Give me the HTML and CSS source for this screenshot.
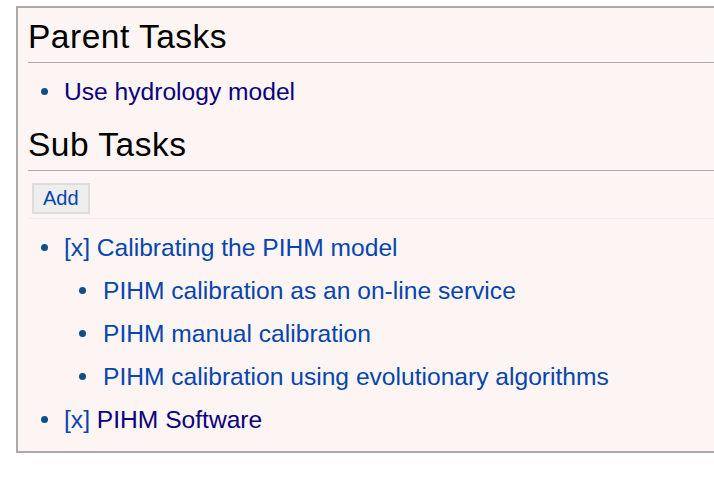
FILE: index.html
```html
<!DOCTYPE html>
<html lang="en">
<head>
    <meta charset="UTF-8">
    <meta name="viewport" content="width=device-width, initial-scale=1.0">
    <link rel="stylesheet" href="styles.css">
    <title> Tasks </title>
</head>
<body>
    <div class="task-box">
        <h2 class="section-head">Parent Tasks</h2>
        <ul class="task-list">
            <li><a href="#" class="visited">Use hydrology model</a></li>
        </ul>

        <h2 class="section-head">Sub Tasks</h2>
        <div class="toolbar">
            <button class="add-button">Add</button>
        </div>
        <ul class="task-list">
            <li><a href="#">[x]</a> <a href="#">Calibrating the PIHM model</a>
                <ul class="sub-list">
                    <li><a href="#">PIHM calibration as an on-line service</a></li>
                    <li><a href="#">PIHM manual calibration</a></li>
                    <li><a href="#">PIHM calibration using evolutionary algorithms</a></li>
                </ul>
            </li>
            <li><a href="#">[x]</a> <a href="#" class="visited">PIHM Software</a></li>
        </ul>
    </div>
</body>
</html>
```

FILE: styles.css
```css
body {
    margin: 0;
    padding: 0;
    font-family: 'Liberation Sans', Arial, sans-serif;
    background: #ffffff;
}

.task-box {
    margin: 6px 0 0 16px;
    padding: 0 0 10px 10px;
    border: 2px solid #aaaaaa;
    border-right: none;
    background: #fdf5f3;
}

.section-head {
    margin: 13px 0 0;
    padding-bottom: 6px;
    font-size: 33.5px;
    letter-spacing: 0.5px;
    font-weight: normal;
    line-height: 38px;
    color: #000;
    border-bottom: 1px solid #aaaaaa;
}

.section-head:first-child {
    margin-top: 10px;
}

.task-list {
    list-style: none;
    margin: 7px 0 0;
    padding-left: 36px;
    font-size: 24.6px;
    line-height: 43px;
}

.sub-list {
    list-style: none;
    margin: 0;
    padding-left: 39px;
}

.task-list li::before {
    content: "";
    display: inline-block;
    width: 7px;
    height: 7px;
    border-radius: 50%;
    background: #0d4f86;
    margin-left: -23px;
    margin-right: 16px;
    vertical-align: 5px;
}

.sub-list li::before {
    margin-left: -24px;
    margin-right: 17px;
}

a {
    color: #0645ad;
    text-decoration: none;
}

a.visited {
    color: #0b0080;
}

.toolbar {
    margin-top: 12px;
    padding: 0 0 4px 4px;
    border-bottom: 1px solid #eeeeee;
}

.add-button {
    font-family: inherit;
    font-size: 20px;
    line-height: 23px;
    color: #0645ad;
    background: #eeeeee;
    border: 2px solid #dddddd;
    border-radius: 0;
    padding: 2px 9px;
    margin: 0;
    cursor: pointer;
}
```
